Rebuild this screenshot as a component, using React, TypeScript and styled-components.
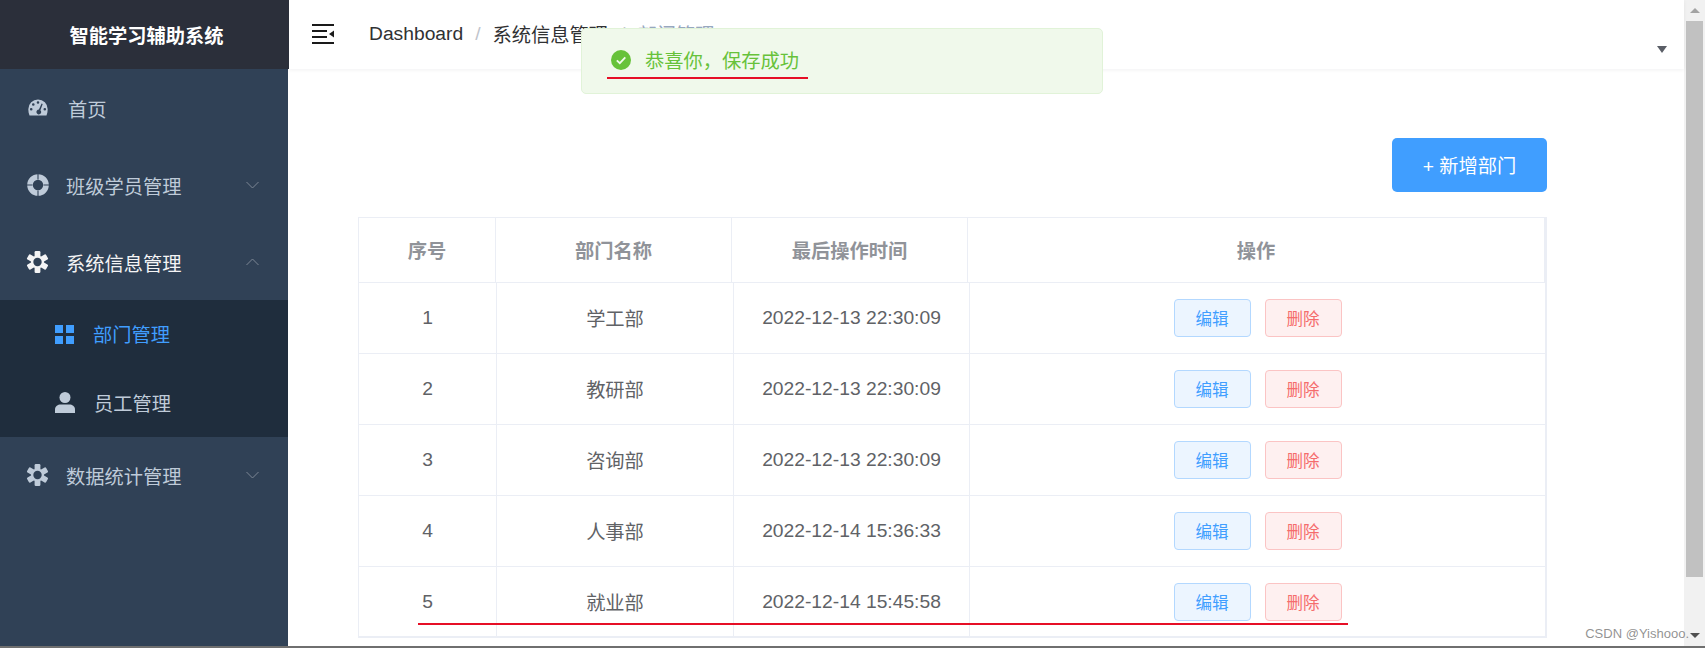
import React from 'react';
import styled, { createGlobalStyle } from 'styled-components';

const GlobalStyle = createGlobalStyle`
    html, body {
        margin: 0;
        padding: 0;
        overflow: hidden;
        background: #fff;
    }
    * {
        box-sizing: border-box;
    }
`

const Page = styled.div`
    position: relative;
    width: 1705px;
    height: 648px;
    display: flex;
    flex-direction: column;
    overflow: hidden;
    font-family: "Liberation Sans", "Noto Sans CJK SC", sans-serif;
    font-size: 19.25px;
`
const Body = styled.div`
    flex: 1;
    min-height: 0;
    display: flex;
`
const BottomEdge = styled.div`
    height: 2px;
    background: #6f6f6f;
`

const Sidebar = styled.aside`
    width: 288px;
    flex-shrink: 0;
    background: #304156;
`
const Logo = styled.div`
    position: relative;
    z-index: 2;
    width: 289px;
    height: 69px;
    padding-left: 4px;
    background: #2b2f3a;
    color: #fff;
    font-weight: 700;
    display: flex;
    align-items: center;
    justify-content: center;
`
const MenuRow = styled.div<{ $left: number; $sub?: boolean; $color: string }>`
    height: ${props => (props.$sub ? '68.4px' : '77px')};
    padding-left: ${props => props.$left}px;
    padding-right: 29px;
    color: ${props => props.$color};
    display: flex;
    align-items: center;
`
const IconBox = styled.span<{ $width: number }>`
    width: ${props => props.$width}px;
    flex-shrink: 0;
    display: flex;
    align-items: center;
`
const MenuLabel = styled.span`
    flex: 1;
    position: relative;
    top: 1px;
`
const SubMenu = styled.div`
    background: #1f2d3d;
    ${MenuLabel} {
        top: 0;
    }
`

const Main = styled.main`
    position: relative;
    flex: 1;
    min-width: 0;
`
const TopBar = styled.header`
    height: 69px;
    padding-left: 24px;
    padding-right: 17px;
    background: #fff;
    box-shadow: 0 1px 4px rgba(0, 21, 41, 0.06);
    display: flex;
    align-items: center;
`
const FoldBox = styled.span`
    display: flex;
    margin-top: -2px;
`
const Breadcrumb = styled.nav`
    flex: 1;
    margin-left: 35px;
    margin-top: -1px;
    color: #303133;
    display: flex;
    align-items: center;
`
const CrumbSep = styled.span`
    margin: 0 12px;
    color: #c0c4cc;
`
const CrumbLast = styled.span`
    color: #97a8be;
`
const Caret = styled.span`
    width: 0;
    height: 0;
    margin-top: 29px;
    border-left: 5.5px solid transparent;
    border-right: 5.5px solid transparent;
    border-top: 7px solid #5a5e66;
`

const Toast = styled.div`
    position: absolute;
    top: 28px;
    left: 293px;
    width: 522px;
    height: 66px;
    padding-left: 29px;
    padding-bottom: 2px;
    background: #f0f9eb;
    border: 1px solid #e1f3d8;
    border-radius: 5px;
    color: #67c23a;
    display: flex;
    align-items: center;
    gap: 14px;
`
const ToastMark = styled.span`
    position: absolute;
    left: 25px;
    top: 48px;
    width: 201px;
    height: 2px;
    background: #e60f26;
`

const Content = styled.section`
    padding: 69px 137px 0 70px;
`
const Toolbar = styled.div`
    display: flex;
    justify-content: flex-end;
    margin-bottom: 25px;
`
const AddButton = styled.button`
    width: 155px;
    height: 54px;
    border: none;
    border-radius: 5px;
    background: #409eff;
    color: #fff;
    font: inherit;
`

const Table = styled.div`
    position: relative;
    border: 1px solid #ebeef5;
    border-right-width: 2px;
    border-bottom-width: 2px;
    text-align: center;
`
const HeadRow = styled.div`
    height: 65px;
    display: grid;
    grid-template-columns: 137px 236px 236px 1fr;
    border-bottom: 1px solid #ebeef5;
`
const HeadCell = styled.div`
    color: #909399;
    font-weight: 700;
    border-right: 1px solid #ebeef5;
    display: flex;
    align-items: center;
    justify-content: center;
`
const Row = styled.div<{ $last?: boolean }>`
    height: ${props => (props.$last ? '69px' : '71px')};
    display: grid;
    grid-template-columns: 138px 237px 236px 1fr;
    border-bottom: ${props => (props.$last ? 'none' : '1px solid #ebeef5')};
`
const Cell = styled.div`
    color: #606266;
    border-right: 1px solid #ebeef5;
    display: flex;
    align-items: center;
    justify-content: center;
    gap: 14px;
    &:last-child {
        border-right: none;
    }
`
const SmallButton = styled.button<{ $danger?: boolean }>`
    width: 77px;
    height: 38px;
    padding: 0;
    border-radius: 4px;
    border: 1px solid ${props => (props.$danger ? '#fbc4c4' : '#b3d8ff')};
    background: ${props => (props.$danger ? '#fef0f0' : '#ecf5ff')};
    color: ${props => (props.$danger ? '#f56c6c' : '#409eff')};
    font-family: inherit;
    font-size: 16.5px;
`
const RowMark = styled.span`
    position: absolute;
    left: 59px;
    top: 405px;
    width: 930px;
    height: 2px;
    background: #e60f26;
`

const ScrollBar = styled.div`
    width: 21px;
    flex-shrink: 0;
    background: #f1f1f1;
    display: flex;
    flex-direction: column;
    justify-content: space-between;
`
const ScrollButton = styled.div`
    height: 21px;
    flex-shrink: 0;
    display: flex;
    align-items: center;
    justify-content: center;
`
const ArrowUp = styled.span`
    width: 0;
    height: 0;
    border-left: 5px solid transparent;
    border-right: 5px solid transparent;
    border-bottom: 5px solid #a3a3a3;
`
const ArrowDown = styled.span`
    width: 0;
    height: 0;
    border-left: 5px solid transparent;
    border-right: 5px solid transparent;
    border-top: 5px solid #505050;
`
const Thumb = styled.div`
    height: 556px;
    margin: 0 2px auto;
    background: #c1c1c1;
`
const Watermark = styled.span`
    position: absolute;
    right: 16px;
    bottom: 7px;
    color: rgba(110, 110, 110, 0.75);
    font-size: 13px;
`

function DashIcon() {
    return (
        <svg width="20" height="17" viewBox="0 0 20 17">
            <path
                fill="currentColor"
                fillRule="evenodd"
                d="M10 0.5a9.7 9.7 0 0 1 9.7 9.7c0 2.2-.4 4.2-1.2 6.3H1.5C.7 14.4.3 12.4.3 10.2A9.7 9.7 0 0 1 10 .5zM10 2.2a1.3 1.3 0 1 0 0 2.6 1.3 1.3 0 0 0 0-2.6zM5.3 4.2a1.3 1.3 0 1 0 0 2.6 1.3 1.3 0 0 0 0-2.6zM3.2 9a1.3 1.3 0 1 0 0 2.6 1.3 1.3 0 0 0 0-2.6zM16.8 9a1.3 1.3 0 1 0 0 2.6 1.3 1.3 0 0 0 0-2.6zM13.6 4.6 10.9 10.6a2.4 2.4 0 1 0 1.5.6l2.3-6.2z"
            />
        </svg>
    );
}

function RingIcon() {
    return (
        <svg width="22" height="22" viewBox="0 0 22 22">
            <circle cx="11" cy="11" r="8" fill="none" stroke="currentColor" strokeWidth="5.6" />
            <g stroke="#304156" strokeWidth="1.1">
                <path d="M11 0v5.5M11 16.5V22M0 11h5.5M16.5 11H22" />
            </g>
        </svg>
    );
}

function GearIcon() {
    return (
        <svg width="23" height="22" viewBox="0 0 23 22">
            <g fill="currentColor">
                <rect x="8.6" y="0" width="5.8" height="22" rx="1.2" />
                <rect x="8.6" y="0" width="5.8" height="22" rx="1.2" transform="rotate(60 11.5 11)" />
                <rect x="8.6" y="0" width="5.8" height="22" rx="1.2" transform="rotate(120 11.5 11)" />
            </g>
            <circle cx="11.5" cy="11" r="6.5" fill="currentColor" />
            <circle cx="11.5" cy="11" r="4.2" fill="#304156" />
        </svg>
    );
}

function GridIcon() {
    return (
        <svg width="19" height="19" viewBox="0 0 19 19">
            <g fill="currentColor">
                <rect x="0" y="0" width="8" height="8" />
                <rect x="11" y="0" width="8" height="8" />
                <rect x="0" y="11" width="8" height="8" />
                <rect x="11" y="11" width="8" height="8" />
            </g>
        </svg>
    );
}

function UserIcon() {
    return (
        <svg width="20" height="21" viewBox="0 0 20 21">
            <g fill="currentColor">
                <circle cx="10" cy="5.5" r="5.5" />
                <path d="M0 21v-3.5C0 14 3 12.5 5.5 12.5h9c2.500 0 5.500 1.500 5.500 5V21z" />
            </g>
        </svg>
    );
}

function Chevron({ up }: { up?: boolean }) {
    return (
        <svg width="13" height="8" viewBox="0 0 13 8">
            <path
                d={up ? 'M.5 7 6.500 1 12.500 7' : 'M.5 1 6.500 7 12.500 1'}
                fill="none"
                stroke="#7d8794"
                strokeWidth="1"
            />
        </svg>
    );
}

function FoldIcon() {
    return (
        <svg width="22" height="20" viewBox="0 0 22 20">
            <g fill="#1a1a1a">
                <rect x="0" y="0" width="22" height="2" />
                <rect x="0" y="6" width="15" height="2" />
                <rect x="0" y="12" width="15" height="2" />
                <rect x="0" y="18" width="22" height="2" />
                <path d="M22 6.500v7L17 10z" />
            </g>
        </svg>
    );
}

function CheckIcon() {
    return (
        <svg width="20" height="20" viewBox="0 0 20 20">
            <circle cx="10" cy="10" r="10" fill="#67c23a" />
            <path d="M5.800 10.300 8.800 13.200 14.300 7.400" fill="none" stroke="#f0f9eb" strokeWidth="1.800" />
        </svg>
    );
}

const departments = [
    { id: 1, name: '学工部', time: '2022-12-13 22:30:09' },
    { id: 2, name: '教研部', time: '2022-12-13 22:30:09' },
    { id: 3, name: '咨询部', time: '2022-12-13 22:30:09' },
    { id: 4, name: '人事部', time: '2022-12-14 15:36:33' },
    { id: 5, name: '就业部', time: '2022-12-14 15:45:58' },
];

const MENU_TEXT = '#bfcbd9';

function App() {
    return (
        <Page>
            <GlobalStyle />
            <Body>
                <Sidebar>
                    <Logo>智能学习辅助系统</Logo>
                    <MenuRow $left={28} $color={MENU_TEXT}>
                        <IconBox $width={40}><DashIcon /></IconBox>
                        <MenuLabel>首页</MenuLabel>
                    </MenuRow>
                    <MenuRow $left={27} $color={MENU_TEXT}>
                        <IconBox $width={39}><RingIcon /></IconBox>
                        <MenuLabel>班级学员管理</MenuLabel>
                        <Chevron />
                    </MenuRow>
                    <MenuRow $left={26} $color="#f4f4f5">
                        <IconBox $width={40}><GearIcon /></IconBox>
                        <MenuLabel>系统信息管理</MenuLabel>
                        <Chevron up />
                    </MenuRow>
                    <SubMenu>
                        <MenuRow $left={55} $sub $color="#409eff">
                            <IconBox $width={38}><GridIcon /></IconBox>
                            <MenuLabel>部门管理</MenuLabel>
                        </MenuRow>
                        <MenuRow $left={55} $sub $color={MENU_TEXT}>
                            <IconBox $width={39}><UserIcon /></IconBox>
                            <MenuLabel>员工管理</MenuLabel>
                        </MenuRow>
                    </SubMenu>
                    <MenuRow $left={26} $color={MENU_TEXT}>
                        <IconBox $width={40}><GearIcon /></IconBox>
                        <MenuLabel>数据统计管理</MenuLabel>
                        <Chevron />
                    </MenuRow>
                </Sidebar>
                <Main>
                    <TopBar>
                        <FoldBox><FoldIcon /></FoldBox>
                        <Breadcrumb>
                            <span>Dashboard</span>
                            <CrumbSep>/</CrumbSep>
                            <span>系统信息管理</span>
                            <CrumbSep>/</CrumbSep>
                            <CrumbLast>部门管理</CrumbLast>
                        </Breadcrumb>
                        <Caret />
                    </TopBar>
                    <Toast>
                        <CheckIcon />
                        <span>恭喜你，保存成功</span>
                        <ToastMark />
                    </Toast>
                    <Content>
                        <Toolbar>
                            <AddButton>+ 新增部门</AddButton>
                        </Toolbar>
                        <Table>
                            <HeadRow>
                                <HeadCell>序号</HeadCell>
                                <HeadCell>部门名称</HeadCell>
                                <HeadCell>最后操作时间</HeadCell>
                                <HeadCell>操作</HeadCell>
                            </HeadRow>
                            {departments.map((dept, index) => (
                                <Row key={dept.id} $last={index === departments.length - 1}>
                                    <Cell>{dept.id}</Cell>
                                    <Cell>{dept.name}</Cell>
                                    <Cell>{dept.time}</Cell>
                                    <Cell>
                                        <SmallButton>编辑</SmallButton>
                                        <SmallButton $danger>删除</SmallButton>
                                    </Cell>
                                </Row>
                            ))}
                            <RowMark />
                        </Table>
                    </Content>
                </Main>
                <ScrollBar>
                    <ScrollButton><ArrowUp /></ScrollButton>
                    <Thumb />
                    <ScrollButton><ArrowDown /></ScrollButton>
                </ScrollBar>
            </Body>
            <BottomEdge />
            <Watermark>CSDN @Yishooo.</Watermark>
        </Page>
    );
}

export default App;
